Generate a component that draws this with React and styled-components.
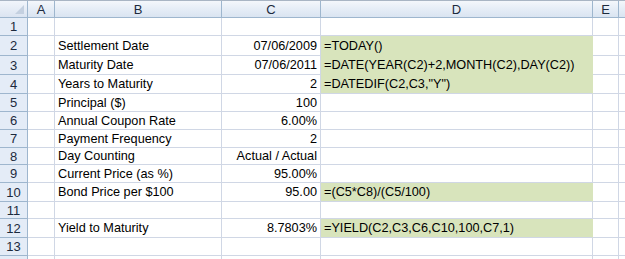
import styled, { createGlobalStyle } from "styled-components"

const GlobalStyle = createGlobalStyle`
  html, body {
    margin: 0;
    padding: 0;
    background: #ffffff;
  }
  body {
    font-family: Arial, "Liberation Sans", sans-serif;
    overflow: hidden;
  }
`

const COLS = [28, 27, 167, 99, 272, 26, 40]
const COL_NAMES = ["A", "B", "C", "D", "E", ""]
const ROW_HEIGHTS = [18, 20, 19, 19, 18, 18, 18, 17, 18, 19, 17, 19, 18, 18]

const rows = [
  {},
  { b: "Settlement Date", c: "07/06/2009", d: "=TODAY()", fill: true },
  { b: "Maturity Date", c: "07/06/2011", d: "=DATE(YEAR(C2)+2,MONTH(C2),DAY(C2))", fill: true },
  { b: "Years to Maturity", c: "2", d: '=DATEDIF(C2,C3,"Y")', fill: true },
  { b: "Principal ($)", c: "100" },
  { b: "Annual Coupon Rate", c: "6.00%" },
  { b: "Payment Frequency", c: "2" },
  { b: "Day Counting", c: "Actual / Actual" },
  { b: "Current Price (as %)", c: "95.00%" },
  { b: "Bond Price per $100", c: "95.00", d: "=(C5*C8)/(C5/100)", fill: true },
  {},
  { b: "Yield to Maturity", c: "8.7803%", d: "=YIELD(C2,C3,C6,C10,100,C7,1)", fill: true },
  {},
  {},
]

const Sheet = styled.div`
  display: grid;
  grid-template-columns: ${COLS.map((w) => w + "px").join(" ")};
  grid-template-rows: 17px ${ROW_HEIGHTS.map((h) => h + "px").join(" ")};
  width: 625px;
  height: 259px;
  overflow: hidden;
  border-top: 1px solid #a9b5c4;
  box-sizing: border-box;
`

const Corner = styled.div`
  position: relative;
  background: linear-gradient(#f1f5fb, #dbe4f1);
  border-right: 1px solid #9eb6ce;
  border-bottom: 1px solid #9eb6ce;

  &::after {
    content: "";
    position: absolute;
    right: 3px;
    bottom: 3px;
    border-style: solid;
    border-width: 0 0 9px 9px;
    border-color: transparent transparent #c4d0e0 transparent;
  }
`

const ColHead = styled.div`
  display: flex;
  align-items: center;
  justify-content: center;
  background: linear-gradient(#f4f7fb 0%, #e7eef7 45%, #dae4f1 100%);
  border-right: 1px solid #9eb6ce;
  border-bottom: 1px solid #9eb6ce;
  font-size: 13px;
  color: #1c2a3d;
`

const RowHead = styled.div`
  display: flex;
  align-items: center;
  justify-content: center;
  background: #e4ecf7;
  border-right: 1px solid #9eb6ce;
  border-bottom: 1px solid #9eb6ce;
  font-size: 13px;
  color: #1c2a3d;
`

const Cell = styled.div`
  display: flex;
  align-items: center;
  justify-content: ${(p) => (p.$right ? "flex-end" : "flex-start")};
  padding: 0 3px;
  background: ${(p) => (p.$fill ? "#d8e4bc" : "#ffffff")};
  border-right: 1px solid ${(p) => (p.$fill ? "#d8e4bc" : "#d0d7e5")};
  border-bottom: 1px solid ${(p) => (p.$fill && p.$fillBelow ? "#d8e4bc" : "#d0d7e5")};
  font-size: 12.7px;
  color: #000000;
  white-space: nowrap;
  min-width: 0;
`

function App() {
  return (
    <>
      <GlobalStyle />
      <Sheet>
        <Corner />
        {COL_NAMES.map((name, i) => (
          <ColHead key={i}>{name}</ColHead>
        ))}
        {rows.map((row, r) => {
          const below = rows[r + 1] || {}
          return [
            <RowHead key={"h" + r}>{r + 1}</RowHead>,
            <Cell key={"a" + r} />,
            <Cell key={"b" + r}>{row.b}</Cell>,
            <Cell key={"c" + r} $right>{row.c}</Cell>,
            <Cell key={"d" + r} $fill={row.fill} $fillBelow={below.fill}>{row.d}</Cell>,
            <Cell key={"e" + r} />,
            <Cell key={"f" + r} />,
          ]
        })}
      </Sheet>
    </>
  )
}

export default App
